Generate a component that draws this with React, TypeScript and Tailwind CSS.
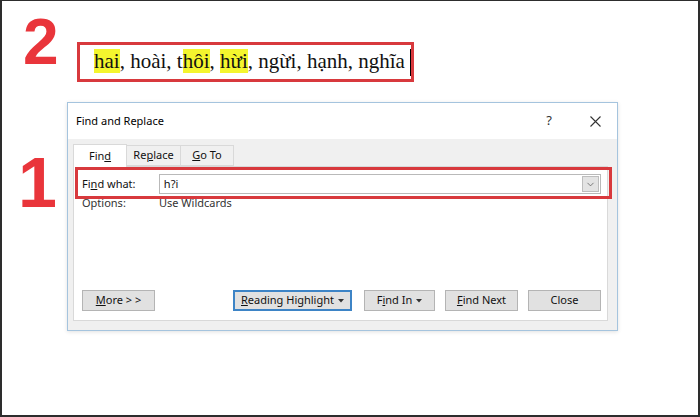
import { ChevronDown } from "lucide-react";

const ui = { fontFamily: '"Noto Sans", "Open Sans", sans-serif' };

const Hl = ({ children }: { children: React.ReactNode }) => (
  <span className="bg-[#f4f52e]">{children}</span>
);

const Caret = () => (
  <svg width="6" height="4" viewBox="0 0 6 4" className="ml-[4px] inline-block">
    <path d="M0 0 L6 0 L3 3.5 Z" fill="#333" />
  </svg>
);

const Btn = ({
  children,
  width,
  focused,
  className = "",
}: {
  children: React.ReactNode;
  width: string;
  focused?: boolean;
  className?: string;
}) => (
  <div
    className={`${width} h-[21px] flex items-center justify-center bg-[#e1e1e1] text-[11px] text-[#111] ${
      focused ? "border-2 border-[#3d84c6]" : "border border-[#b4b4b4]"
    } ${className}`}
  >
    {children}
  </div>
);

const Dialog = () => (
  <div
    className="relative w-[551px] h-[229px] flex flex-col border border-[#a5c4de] bg-[#f0f0f0] shadow-[0_1px_4px_rgba(0,0,0,0.12)]"
    style={ui}
  >
    {/* title bar */}
    <div className="h-[36px] bg-white flex items-center pl-[8px] pr-[16px] text-[11px] text-black">
      <span>Find and Replace</span>
      <span className="ml-auto text-[13px] text-[#333]">?</span>
      <svg width="11" height="11" viewBox="0 0 11 11" className="ml-[38px]">
        <path d="M0.5 0.5 L10.5 10.5 M10.5 0.5 L0.5 10.5" stroke="#333" strokeWidth="1.1" />
      </svg>
    </div>

    <div className="flex-1 flex flex-col pl-[5px] pr-[9px] pt-[5px] pb-[9px] text-[11px] text-[#111]">
      {/* tabs */}
      <div className="flex items-end h-[22px] relative z-10">
        <div className="w-[54px] h-[23px] bg-white border border-b-0 border-[#d9d9d9] flex items-center justify-center -mb-px">
          Fin<span className="underline">d</span>
        </div>
        <div className="w-[54px] h-[21px] bg-[#f0f0f0] border border-l-0 border-[#d9d9d9] flex items-center justify-center">
          Re<span className="underline">p</span>lace
        </div>
        <div className="w-[53px] h-[21px] bg-[#f0f0f0] border border-l-0 border-[#d9d9d9] flex items-center justify-center">
          <span className="underline">G</span>o To
        </div>
      </div>

      {/* panel */}
      <div className="flex-1 flex flex-col bg-white border border-[#d9d9d9] pl-[8px] pr-[6px] pt-[7px] pb-[9px]">
        <div className="flex items-center h-[20px]">
          <span className="w-[77px]">
            Fi<span className="underline">n</span>d what:
          </span>
          <div className="w-[443px] h-[20px] border border-[#b9b9b9] flex items-center pl-[4px] pr-[1px]">
            <span>h?i</span>
            <div className="ml-auto w-[17px] h-[16px] bg-[#e3e3e3] border border-[#bdbdbd] flex items-center justify-center">
              <ChevronDown size={11} strokeWidth={1.6} color="#555" />
            </div>
          </div>
        </div>
        <div className="flex mt-[1px] text-[#333]">
          <span className="w-[77px]">Options:</span>
          <span>Use Wildcards</span>
        </div>

        <div className="mt-auto flex">
          <Btn width="w-[73px]">
            <span className="underline">M</span>ore &gt; &gt;
          </Btn>
          <Btn width="w-[119px]" focused className="ml-auto">
            <span className="underline">R</span>eading Highlight
            <Caret />
          </Btn>
          <Btn width="w-[71px]" className="ml-[12px]">
            F<span className="underline">i</span>nd In
            <Caret />
          </Btn>
          <Btn width="w-[73px]" className="ml-[10px]">
            <span className="underline">F</span>ind Next
          </Btn>
          <Btn width="w-[73px]" className="ml-[10px]">
            Close
          </Btn>
        </div>
      </div>
    </div>

    {/* annotation box around the Find what row */}
    <div className="absolute left-[7px] top-[64px] w-[537px] h-[32px] border-[3px] border-[#d8393d] z-20" />
  </div>
);

export default function App() {
  return (
    <div className="w-[700px] h-[417px] bg-white border-2 border-t border-[#2d2d2d] overflow-hidden">
      {/* step 2: result in document */}
      <div className="flex items-start pl-[21px] pt-[9px]">
        <div
          className="w-[54px] text-[64px] leading-none font-bold text-[#e9353b]"
          style={{ fontFamily: '"Liberation Sans", Arial, sans-serif' }}
        >
          2
        </div>
        <div
          className="mt-[32px] w-[337px] h-[40px] border-[3px] border-[#d8393d] flex items-center pl-[14px] text-[21px] text-[#111]"
          style={{ fontFamily: '"Liberation Serif", "Times New Roman", serif' }}
        >
          <span>
            <Hl>hai</Hl>, hoài, t<Hl>hôi</Hl>, <Hl>hừi</Hl>, ngừi, hạnh, nghĩa
          </span>
          <span className="ml-[5px] w-px h-[27px] bg-black" />
        </div>
      </div>

      {/* step 1: dialog */}
      <div className="flex mt-[20px]">
        <div
          className="w-[65px] pl-[16px] pt-[46px] text-[70px] leading-none font-bold text-[#e9353b]"
          style={{ fontFamily: '"Liberation Sans", Arial, sans-serif' }}
        >
          1
        </div>
        <Dialog />
      </div>
    </div>
  );
}
